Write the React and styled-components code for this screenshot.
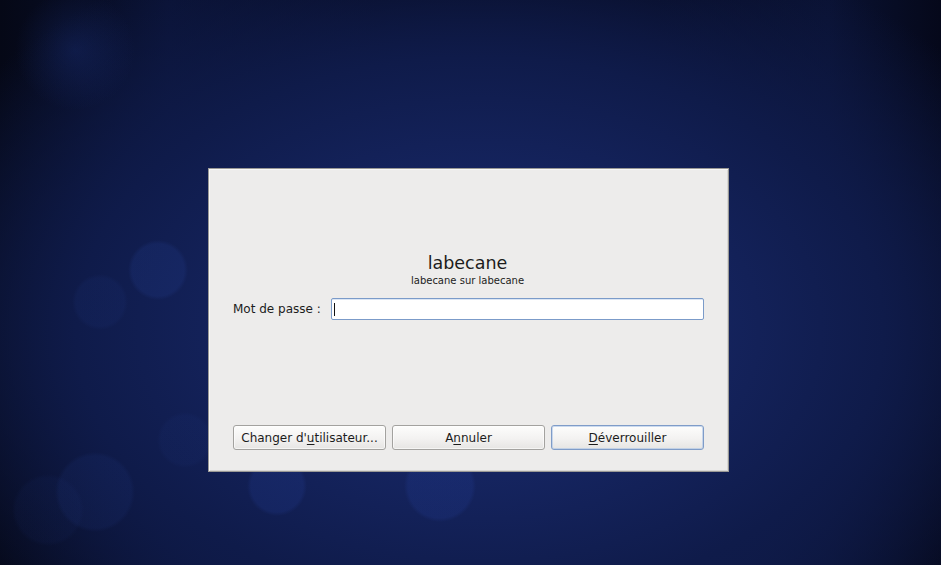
import styled, { createGlobalStyle } from "styled-components";

const GlobalStyle = createGlobalStyle`
  html, body {
    margin: 0;
    padding: 0;
    width: 941px;
    height: 565px;
    overflow: hidden;
  }
  body {
    font-family: "DejaVu Sans", "Liberation Sans", sans-serif;
    color: #1c1c1c;
  }
`;

// desktop wallpaper: dark blue glow with a few soft bokeh discs
const Desktop = styled.div`
  box-sizing: border-box;
  width: 941px;
  height: 565px;
  padding: 168px 0 0 208px;
  background-color: #0c1640;
  background-image:
    radial-gradient(circle at 158px 270px, rgba(40, 70, 160, 0.18) 0 26px, transparent 30px),
    radial-gradient(circle at 100px 302px, rgba(40, 70, 160, 0.09) 0 24px, transparent 28px),
    radial-gradient(circle at 95px 492px, rgba(40, 70, 160, 0.11) 0 36px, transparent 40px),
    radial-gradient(circle at 48px 510px, rgba(40, 70, 160, 0.06) 0 32px, transparent 36px),
    radial-gradient(circle at 277px 486px, rgba(40, 70, 170, 0.18) 0 26px, transparent 30px),
    radial-gradient(circle at 440px 486px, rgba(40, 70, 170, 0.18) 0 32px, transparent 36px),
    radial-gradient(circle at 185px 440px, rgba(40, 70, 160, 0.07) 0 24px, transparent 28px),
    radial-gradient(circle at 75px 50px, rgba(30, 55, 140, 0.3), transparent 60px),
    radial-gradient(ellipse 620px 420px at 480px 330px, #19296b 0%, #15245f 35%, #0f1b4a 65%, rgba(10, 16, 45, 0) 100%),
    linear-gradient(90deg, #050816 0%, #0a1234 18%, rgba(10, 18, 52, 0) 40%, rgba(10, 18, 52, 0) 70%, #0a1233 88%, #05081a 100%),
    linear-gradient(180deg, #060a1f 0%, #0b1540 40%, #0f1c4c 100%);
`;

const Dialog = styled.div`
  box-sizing: border-box;
  width: 521px;
  height: 304px;
  display: flex;
  flex-direction: column;
  padding: 82px 24px 21px 24px;
  background: #edeceb;
  border: 1px solid #9a9996;
  box-shadow: inset 1px 1px 0 #f8f8f7, inset -1px -1px 0 #d8d7d4;
`;

const Header = styled.div`
  display: flex;
  flex-direction: column;
  align-items: center;
  padding-right: 2px;
`;

const Title = styled.div`
  font-size: 17.5px;
  line-height: 24px;
`;

const Subtitle = styled.div`
  font-size: 10px;
  line-height: 12px;
`;

const FieldRow = styled.div`
  display: flex;
  align-items: center;
  gap: 10px;
  margin-top: 11px;
`;

const Label = styled.label`
  font-size: 12px;
  white-space: nowrap;
`;

const Entry = styled.div`
  position: relative;
  box-sizing: border-box;
  flex: 1;
  height: 22px;
  background: #ffffff;
  border: 1px solid #7b9bc9;
  border-radius: 2px;
  box-shadow: inset 0 1px 0 #dce6f4;
`;

const Caret = styled.span`
  position: absolute;
  left: 2px;
  top: 4px;
  width: 1px;
  height: 13px;
  background: #111;
`;

const ButtonRow = styled.div`
  margin-top: auto;
  display: grid;
  grid-template-columns: repeat(3, 1fr);
  gap: 6px;
`;

const Button = styled.button`
  box-sizing: border-box;
  height: 25px;
  padding: 0 6px;
  font-family: inherit;
  font-size: 12px;
  color: #1c1c1c;
  border: 1px solid ${(p) => (p.$default ? "#7f9cc8" : "#a3a29f")};
  border-radius: 3px;
  background: linear-gradient(180deg, #fdfdfc 0%, #f3f2f1 55%, #e6e5e3 100%);
  box-shadow: inset 0 0 0 1px ${(p) => (p.$default ? "rgba(170,195,230,0.6)" : "rgba(255,255,255,0.6)")};
  white-space: nowrap;

  u {
    text-decoration-thickness: 1px;
    text-underline-offset: 2px;
  }
`;

export default function App() {
  return (
    <>
      <GlobalStyle />
      <Desktop>
        <Dialog>
          <Header>
            <Title>labecane</Title>
            <Subtitle>labecane sur labecane</Subtitle>
          </Header>
          <FieldRow>
            <Label>Mot de passe :</Label>
            <Entry>
              <Caret />
            </Entry>
          </FieldRow>
          <ButtonRow>
            <Button>
              Changer d'<u>u</u>tilisateur...
            </Button>
            <Button>
              A<u>n</u>nuler
            </Button>
            <Button $default>
              <u>D</u>éverrouiller
            </Button>
          </ButtonRow>
        </Dialog>
      </Desktop>
    </>
  );
}
